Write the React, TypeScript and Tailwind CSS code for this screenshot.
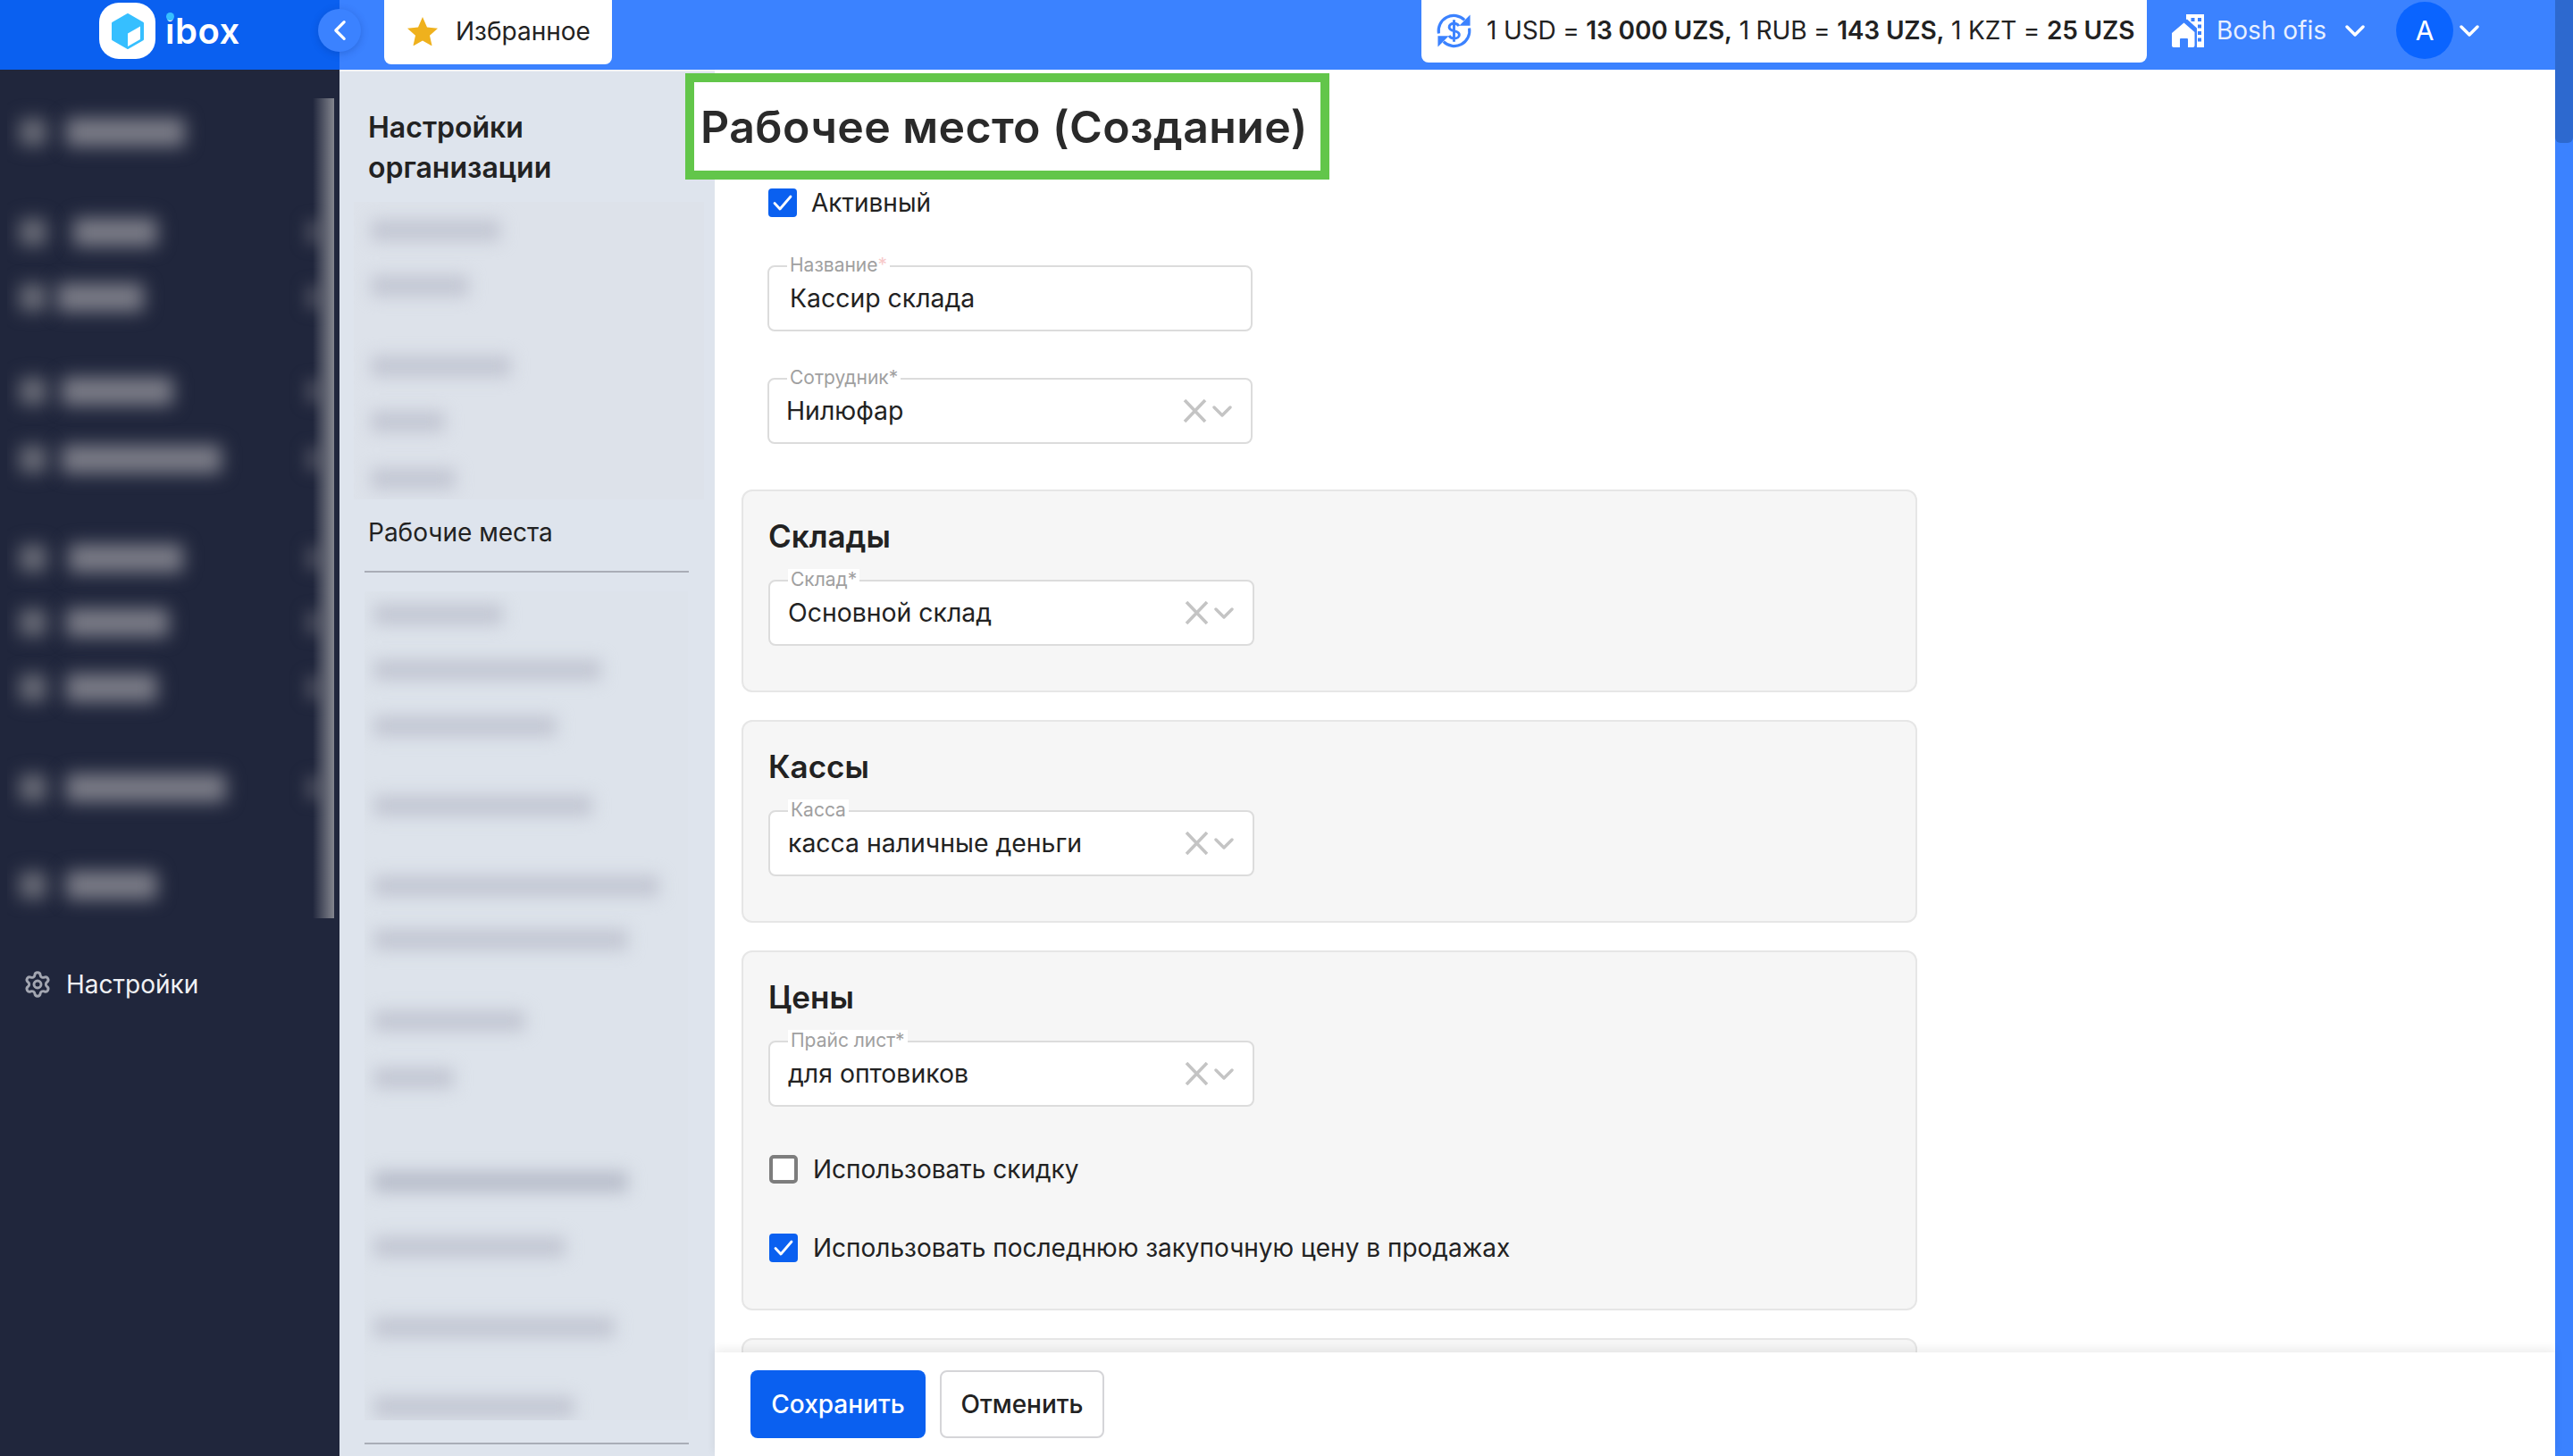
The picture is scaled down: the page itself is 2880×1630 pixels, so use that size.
import { Settings } from "lucide-react";

const sideRows = [
  { gap: 18, left: 22, w: 133 },
  { gap: 72, left: 30, w: 94 },
  { gap: 33, left: 12, w: 97 },
  { gap: 65, left: 17, w: 125 },
  { gap: 36, left: 17, w: 179 },
  { gap: 71, left: 25, w: 128 },
  { gap: 32, left: 22, w: 115 },
  { gap: 33, left: 22, w: 102 },
  { gap: 72, left: 22, w: 179 },
  { gap: 69, left: 22, w: 102 },
];

// ghost chevrons only show on some of the rows
const ghostRows = [false, true, true, true, true, true, true, true, true, false];

const firstGroup = [
  { gap: 20, w: 145 },
  { gap: 38, w: 110 },
  { gap: 66, w: 157 },
  { gap: 38, w: 83 },
  { gap: 40, w: 95 },
];

const secondGroup = [
  { gap: 14, w: 145 },
  { gap: 38, w: 255 },
  { gap: 39, w: 205 },
  { gap: 65, w: 245 },
  { gap: 66, w: 320 },
  { gap: 36, w: 285 },
  { gap: 67, w: 170 },
  { gap: 40, w: 90 },
  { gap: 92, w: 285, dark: true },
  { gap: 49, w: 215 },
  { gap: 66, w: 270 },
  { gap: 65, w: 225 },
];

function Chevron({ className = "" }: { className?: string }) {
  return (
    <svg viewBox="0 0 22 13" fill="none" className={className}>
      <path d="M2 2l9 9 9-9" stroke="currentColor" strokeWidth="3.4" strokeLinecap="round" strokeLinejoin="round" />
    </svg>
  );
}

function Logo() {
  return (
    <div className="flex items-center h-[78px] pl-[111px]">
      <div className="w-[63px] h-[63px] mb-[9px] bg-white rounded-[22px] flex items-center justify-center">
        <svg viewBox="0 0 36 40" className="w-[36px] h-[40px]">
          <path
            d="M18 1.5 34.5 11v18L18 38.5 1.5 29V11z"
            fill="#36bfff"
            stroke="#36bfff"
            strokeWidth="3"
            strokeLinejoin="round"
          />
          <path d="M32 14.5V29L18 37V22.5z" fill="#fff" />
        </svg>
      </div>
      <div className="relative ml-[11px] mb-[9px] text-white text-[40px] leading-[48px] font-semibold tracking-[0.5px]">
        ibox
        <span className="absolute left-[1px] top-[3px] w-[9px] h-[9px] rounded-full bg-[#36bfff]" />
      </div>
    </div>
  );
}

function RateIcon() {
  return (
    <svg viewBox="0 0 42 42" fill="none" className="w-[41px] h-[41px] shrink-0">
      <path d="M3.5 24A17.5 17.5 0 0 1 33 8.500" stroke="#3b82ff" strokeWidth="3.2" />
      <path d="M39.500 2.500V15H27z" fill="#3b82ff" />
      <path d="M38.500 18A17.500 17.500 0 0 1 9 33.500" stroke="#3b82ff" strokeWidth="3.2" />
      <path d="M2.500 39.500V27H15z" fill="#3b82ff" />
      <path
        d="M26.500 15.500c-1-2-3-3-5.500-3-3.200 0-5.500 1.700-5.500 4.300 0 5.700 11.500 3 11.500 8.700 0 2.600-2.500 4.200-5.700 4.200-2.700 0-4.900-1.100-5.800-3.200M21 8.500v25"
        stroke="#3b82ff"
        strokeWidth="3"
      />
    </svg>
  );
}

function OfficeIcon() {
  return (
    <svg viewBox="0 0 37 37" className="w-[37px] h-[37px] shrink-0">
      <path d="M16 0h20v37H26V18L16 8z" fill="#fff" />
      <path d="M21.500 4h4v4h-4zM29 4h4v4h-4zM29 11.500h4v4h-4zM29 19h4v4h-4zM29 26.500h4v4h-4z" fill="#3b82ff" />
      <path d="M17 5.500 28 15.500V37H-1V15.500z" fill="#3b82ff" />
      <path
        d="M13.500 9.500 25.500 20v15a2 2 0 0 1-2 2H18v-9a1 1 0 0 0-1-1h-7a1 1 0 0 0-1 1v9H2a2 2 0 0 1-2-2V21z"
        fill="#fff"
      />
    </svg>
  );
}

function Header() {
  return (
    <header className="flex h-[78px] shrink-0 relative">
      <div className="w-[380px] shrink-0 bg-[#0a60f0]">
        <Logo />
      </div>
      <button className="absolute left-[356px] top-[10px] w-[48px] h-[48px] rounded-full bg-[#3b82ff] shadow-[0_2px_8px_rgba(0,40,120,0.25)] flex items-center justify-center">
        <svg viewBox="0 0 16 24" fill="none" className="w-[15px] h-[24px]">
          <path d="M13 2 3 12l10 10" stroke="#fff" strokeWidth="3.4" strokeLinecap="round" strokeLinejoin="round" />
        </svg>
      </button>
      <div className="flex-1 bg-[#3b82ff] flex items-start pl-[50px]">
        <div className="w-[255px] h-[72px] pb-[3px] bg-white rounded-b-[8px] flex items-center pl-[26px] gap-[20px] text-[#222] text-[28px]">
          <svg viewBox="0 0 34 32" className="w-[34px] h-[32px] shrink-0">
            <path d="M17 0l5 11.500 12 1.200-9 8.100 2.600 11.700L17 26.500 6.400 32.500 9 20.800 0 12.700l12-1.200z" fill="#efb11d" />
          </svg>
          Избранное
        </div>
        <div className="ml-[906px] w-[812px] h-[70px] pb-[2px] bg-white rounded-b-[8px] flex items-center pl-[16px] gap-[16px] text-[#222] text-[28px] whitespace-nowrap tracking-[-0.15px]">
          <RateIcon />
          <span>
            1 USD = <b className="font-semibold">13 000 UZS,</b> 1 RUB = <b className="font-semibold">143 UZS,</b> 1 KZT ={" "}
            <b className="font-semibold">25 UZS</b>
          </span>
        </div>
        <div className="h-[68px] flex items-center text-white">
          <div className="ml-[28px]">
            <OfficeIcon />
          </div>
          <span className="ml-[13px] text-[28px] whitespace-nowrap w-[123px] text-[#e8f0ff]">Bosh ofis</span>
          <Chevron className="ml-[21px] w-[22px] h-[13px]" />
          <div className="ml-[35px] w-[64px] h-[64px] rounded-full bg-[#0a64ff] flex items-center justify-center text-[30px]">
            A
          </div>
          <Chevron className="ml-[7px] w-[22px] h-[13px]" />
        </div>
      </div>
      <div className="absolute right-0 top-0 w-[20px] h-[160px] bg-[#2d69cf] rounded-b-[6px] z-10" />
    </header>
  );
}

function Sidebar() {
  return (
    <aside className="w-[380px] shrink-0 bg-[#20263c] pt-[32px] pl-[8px] pr-[6px] text-white">
      <div className="relative h-[918px] overflow-hidden">
        {sideRows.map((row, i) => (
          <div key={i} className="flex items-center h-[40px] relative" style={{ marginTop: row.gap }}>
            <div className="ml-[14px] w-[30px] h-[30px] shrink-0 rounded bg-[#6b6d78] blur-[10px]" />
            <div
              className="h-[32px] shrink-0 rounded bg-[#7b7c87] blur-[10px]"
              style={{ marginLeft: row.left, width: row.w }}
            />
            {ghostRows[i] && (
              <div className="absolute right-[14px] top-[6px] w-[18px] h-[28px] bg-[#454859] blur-[8px]" />
            )}
          </div>
        ))}
        <div className="absolute right-0 top-0 bottom-0 w-[24px] bg-gradient-to-r from-[#20263c00] to-[#83858e]" />
      </div>
      <div className="mt-[56px] ml-[18px] flex items-center gap-[16px] h-[36px] text-[#f0f1f4] text-[28px]">
        <Settings className="w-[32px] h-[32px] text-[#a3a6b1]" strokeWidth={2.2} />
        Настройки
      </div>
    </aside>
  );
}

function BlurBars({ rows }: { rows: { gap: number; w: number; dark?: boolean }[] }) {
  return (
    <>
      {rows.map((row, i) => (
        <div
          key={i}
          className={
            row.dark
              ? "h-[24px] rounded bg-[#b9becb] blur-[9px]"
              : "h-[24px] rounded bg-[#c3c7d3] blur-[9px]"
          }
          style={{ marginTop: row.gap, width: row.w }}
        />
      ))}
    </>
  );
}

function SettingsNav() {
  return (
    <nav className="w-[420px] shrink-0 bg-[#dee4ed] border-t-2 border-[#f2f4f8] text-[#222] overflow-hidden">
      <h2 className="mt-[40px] ml-[32px] text-[32px] leading-[45px] font-semibold">
        Настройки
        <br />
        организации
      </h2>
      <div className="mt-[16px] ml-[16px] w-[392px] h-[333px] bg-[#dde2ea] pl-[19px] overflow-hidden">
        <BlurBars rows={firstGroup} />
      </div>
      <div className="mt-[20px] ml-[32px] h-[34px] leading-[34px] text-[28px]">Рабочие места</div>
      <div className="mt-[26px] ml-[28px] w-[363px] h-[2px] bg-[#a9adb7]" />
      <div className="mt-[21px] ml-[28px] w-[362px] h-[928px] bg-[#dde3eb] pl-[10px] overflow-hidden">
        <BlurBars rows={secondGroup} />
      </div>
      <div className="mt-[25px] ml-[28px] w-[363px] h-[2px] bg-[#a9adb7]" />
    </nav>
  );
}

function Check({ checked, className = "" }: { checked: boolean; className?: string }) {
  if (!checked) {
    return <span className={"block shrink-0 border-[4px] border-[#7d7d7d] rounded-[5px] bg-white " + className} />;
  }
  return (
    <span className={"flex items-center justify-center shrink-0 bg-[#0a60f0] rounded-[4px] " + className}>
      <svg viewBox="0 0 22 18" fill="none" className="w-[22px] h-[18px]">
        <path d="M2 9.500 8 16 20 2" stroke="#fff" strokeWidth="2.800" strokeLinecap="round" strokeLinejoin="round" />
      </svg>
    </span>
  );
}

function SelectIcons() {
  return (
    <div className="ml-auto mr-[21px] flex items-center gap-[6px] text-[#c4c4c4]">
      <svg viewBox="0 0 27 26" fill="none" className="w-[27px] h-[26px]">
        <path d="M2 1l23 24M25 1 2 25" stroke="currentColor" strokeWidth="3.600" />
      </svg>
      <Chevron className="w-[22px] h-[13px]" />
    </div>
  );
}

function Field({
  label,
  value,
  select,
  star = "plain",
  valueClass,
  className = "",
}: {
  label: string;
  value: string;
  select?: boolean;
  star?: "plain" | "red" | "none";
  valueClass: string;
  className?: string;
}) {
  return (
    <div className={"relative h-[74px] border-2 border-[#dcdcdc] rounded-[8px] bg-white flex items-center " + className}>
      <span className="absolute left-[20px] top-[-14px] h-[24px] px-[3px] text-[21px] leading-[24px] text-[#a0a0a0] bg-white whitespace-nowrap">
        {label}
        {star === "red" && <span className="text-[#f7c9c9]">*</span>}
        {star === "plain" && "*"}
      </span>
      <span className={"text-[28.4px] text-[#222] whitespace-nowrap " + valueClass}>{value}</span>
      {select && <SelectIcons />}
    </div>
  );
}

function Section({
  title,
  field,
  value,
  noStar,
  className,
  children,
}: {
  title: string;
  field: string;
  value: string;
  noStar?: boolean;
  className: string;
  children?: React.ReactNode;
}) {
  return (
    <section className={"w-[1316px] bg-[#f6f6f6] border-2 border-[#e6e6e6] rounded-[12px] pl-[28px] pt-[30px] " + className}>
      <h3 className="h-[40px] leading-[40px] text-[35px] font-semibold text-[#222]">{title}</h3>
      <Field
        label={field}
        value={value}
        select
        star={noStar ? "none" : "plain"}
        valueClass="ml-[20px]"
        className="mt-[29px] w-[544px]"
      />
      {children}
    </section>
  );
}

function Main() {
  return (
    <main className="flex-1 min-w-0 relative flex flex-col bg-white text-[#222]">
      <div className="absolute left-[-33px] top-[4px] w-[721px] h-[119px] border-[10px] border-[#62c64a] bg-white flex items-center pl-[7px] pt-[2px] z-10">
        <h1 className="text-[50px] font-semibold text-[#2a2a2a] whitespace-nowrap tracking-[0.4px]">
          Рабочее место (Создание)
        </h1>
      </div>

      <div className="flex-1 min-h-0 overflow-hidden pt-[133px] pl-[30px]">
        <label className="ml-[30px] flex items-center gap-[16px] h-[32px] text-[28px]">
          <Check checked className="w-[32px] h-[32px]" />
          Активный
        </label>
        <Field
          label="Название"
          value="Кассир склада"
          star="red"
          valueClass="ml-[23px]"
          className="mt-[54px] ml-[29px] w-[543px]"
        />
        <Field
          label="Сотрудник"
          value="Нилюфар"
          select
          valueClass="ml-[19px]"
          className="mt-[52px] ml-[29px] w-[543px]"
        />

        <Section title="Склады" field="Склад" value="Основной склад" className="mt-[51px] h-[227px]" />
        <Section title="Кассы" field="Касса" value="касса наличные деньги" noStar className="mt-[31px] h-[227px]" />
        <Section title="Цены" field="Прайс лист" value="для оптовиков" className="mt-[31px] h-[403px]">
          <label className="mt-[54px] ml-[1px] flex items-center gap-[17px] h-[32px] text-[28px]">
            <Check checked={false} className="w-[32px] h-[32px]" />
            Использовать скидку
          </label>
          <label className="mt-[56px] ml-[1px] flex items-center gap-[17px] h-[32px] text-[28px]">
            <Check checked className="w-[32px] h-[32px]" />
            Использовать последнюю закупочную цену в продажах
          </label>
        </Section>
        <div className="mt-[31px] w-[1316px] h-[40px] bg-[#f6f6f6] border-2 border-[#e6e6e6] rounded-t-[12px]" />
      </div>

      <footer className="h-[116px] shrink-0 bg-white flex items-start gap-[16px] pt-[20px] pl-[40px] shadow-[0_-4px_10px_rgba(0,0,0,0.07)] z-[1]">
        <button className="w-[196px] h-[76px] rounded-[8px] bg-[#0a60f0] text-white text-[28px] font-medium">
          Сохранить
        </button>
        <button className="w-[184px] h-[76px] rounded-[8px] border-2 border-[#d5d5d8] bg-white text-[#222] text-[28px] font-medium">
          Отменить
        </button>
      </footer>
    </main>
  );
}

export default function App() {
  return (
    <div className="w-[2880px] h-[1630px] flex flex-col overflow-hidden bg-white font-['Inter',sans-serif]">
      <Header />
      <div className="flex flex-1 min-h-0">
        <Sidebar />
        <SettingsNav />
        <Main />
        <div className="w-[20px] shrink-0 bg-[#3b82ff]" />
      </div>
    </div>
  );
}
